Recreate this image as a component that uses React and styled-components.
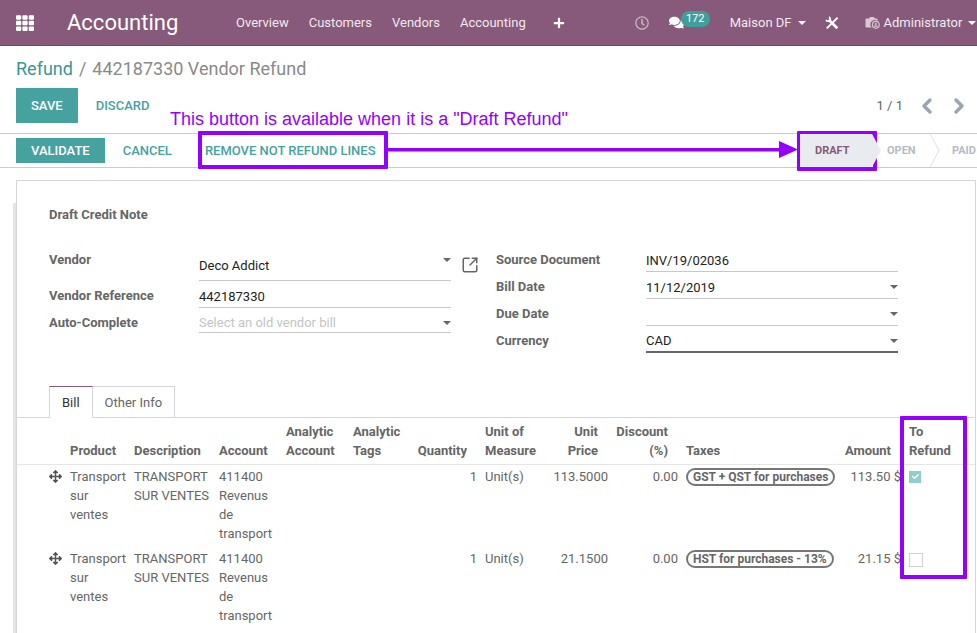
import React from 'react';
import styled, { createGlobalStyle } from 'styled-components';
import { FaTh, FaPlus, FaComments, FaArrowsAlt, FaRegClock, FaCheck } from 'react-icons/fa';
import { SquareArrowOutUpRight, ChevronLeft, ChevronRight } from 'lucide-react';

const PURPLE = '#9400ff';
const TEAM = '#45a29f';
const TEXT = '#666666';

const GlobalStyle = createGlobalStyle`
  html, body {
    margin: 0;
    padding: 0;
    height: 100%;
    background: #fff;
    overflow: hidden;
  }
  body {
    font-family: Roboto, "Noto Sans", sans-serif;
    font-size: 13px;
    color: ${TEXT};
  }
`;

const Page = styled.div`
  position: relative;
  width: 977px;
  height: 633px;
  overflow: hidden;
`;

/* top navbar */
const Navbar = styled.header`
  display: flex;
  align-items: center;
  height: 45px;
  background: #875a7b;
  border-bottom: 1px solid #6f4a66;
  color: #f1e9ef;
  box-sizing: content-box;
`;

const AppsIcon = styled(FaTh)`
  width: 18px;
  height: 18px;
  margin-left: 16px;
  color: #fff;
`;

const Brand = styled.div`
  margin-left: 33px;
  width: 169px;
  font-size: 22px;
  color: #fff;
`;

const NavMenu = styled.nav`
  display: flex;
  align-items: center;
  gap: 20px;
`;

const NavRight = styled.div`
  display: flex;
  align-items: center;
  margin-left: 70px;
`;

const NavItem = styled.span`
  display: inline-flex;
  align-items: center;
  margin-left: ${(p) => p.$gap || 0}px;
  color: ${(p) => p.$color || 'inherit'};
  white-space: nowrap;
`;

const Caret = styled.i`
  display: inline-block;
  width: 0;
  height: 0;
  margin-left: ${(p) => p.$gap || 6}px;
  border-left: 4px solid transparent;
  border-right: 4px solid transparent;
  border-top: 4px solid ${(p) => p.$color || '#fff'};
`;

const ChatWrap = styled.span`
  position: relative;
  display: inline-flex;
  width: 41px;
  margin-left: 20px;
  color: #fff;
`;

const Badge = styled.span`
  position: absolute;
  left: 12px;
  top: -4px;
  width: 29px;
  height: 16px;
  line-height: 15px;
  border-radius: 8px;
  background: #3f9f9c;
  color: #fff;
  font-size: 11px;
  text-align: center;
`;

/* control panel */
const ControlPanel = styled.section`
  padding: 11px 6px 0 16px;
`;

const Breadcrumb = styled.div`
  font-size: 18px;
  line-height: 24px;
  color: #8a8a8a;
  a { color: #3a9592; }
  span { margin: 0 6px; }
`;

const ButtonsRow = styled.div`
  display: flex;
  align-items: center;
  margin-top: 7px;
  height: 35px;
`;

const Primary = styled.button`
  height: ${(p) => p.$h}px;
  padding: 0 15px;
  border: 0;
  background: ${TEAM};
  color: #fff;
  font: 500 13px Roboto, sans-serif;
  text-transform: uppercase;
`;

const LinkBtn = styled.button`
  margin-left: ${(p) => p.$gap}px;
  padding: 0;
  border: 0;
  background: none;
  color: ${TEAM};
  font: 500 13px Roboto, sans-serif;
  text-transform: uppercase;
  white-space: nowrap;
`;

const Pager = styled.div`
  display: flex;
  align-items: center;
  margin-left: auto;
  color: #666;
  svg { color: #9aa5af; }
`;

const PrevIcon = styled(ChevronLeft)`
  margin-left: 12px;
`;

const NextIcon = styled(ChevronRight)`
  margin-left: 8px;
`;

/* status bar */
const StatusBar = styled.section`
  display: flex;
  align-items: center;
  height: 33px;
  margin-top: 10px;
  padding-left: 16px;
  border-top: 1px solid #ccc;
  border-bottom: 1px solid #ccc;
  box-sizing: content-box;
  overflow: hidden;
`;

const Stages = styled.div`
  display: flex;
  align-self: stretch;
  margin-left: auto;
  margin-right: -1px;
`;

const Stage = styled.div`
  position: relative;
  display: flex;
  align-items: center;
  width: ${(p) => p.$w}px;
  padding-left: ${(p) => p.$pad}px;
  box-sizing: border-box;
  background: ${(p) => (p.$active ? '#e9ecef' : 'transparent')};
  color: ${(p) => (p.$active ? '#875a7b' : '#b4bcc3')};
  font-size: 11px;
  font-weight: 700;
  z-index: ${(p) => (p.$active ? 2 : 1)};
`;

const StageTip = styled.svg`
  position: absolute;
  left: 100%;
  top: 0;
  width: 10px;
  height: 33px;
`;

/* form sheet */
const Sheet = styled.main`
  position: relative;
  margin: 12px 1px 0 16px;
  padding: 0;
  border: 1px solid #d6d6d6;
  border-bottom: 0;
  height: 460px;
  &::before {
    content: '';
    position: absolute;
    left: -4px;
    top: 22px;
    bottom: 0;
    width: 3px;
    background: #e4e4e8;
  }
`;

const SheetBody = styled.div`
  padding: 26px 0 0 32px;
`;

const Title = styled.div`
  font-weight: 700;
  font-size: 13px;
  line-height: 16px;
`;

const Columns = styled.div`
  display: flex;
  margin-top: 22px;
`;

const Group = styled.div`
  width: ${(p) => p.$w}px;
`;

const Row = styled.div`
  display: flex;
  height: ${(p) => p.$h}px;
`;

const Label = styled.div`
  width: 150px;
  flex: none;
  padding-top: 7px;
  font-weight: 700;
  font-size: 13px;
  line-height: 16px;
`;

const Field = styled.div`
  position: relative;
  display: flex;
  align-items: flex-end;
  justify-content: space-between;
  width: 252px;
  box-sizing: border-box;
  padding-bottom: ${(p) => (p.$pad == null ? 2 : p.$pad)}px;
  border-bottom: ${(p) => (p.$focus ? '2px solid #666' : '1px solid #c8c8c8')};
  color: ${(p) => (p.$muted ? '#c4c4c4' : '#222')};
  line-height: 16px;
`;

const FieldCaret = styled(Caret)`
  position: absolute;
  right: 0;
  top: 13px;
  margin: 0;
`;

const LinkIcon = styled(SquareArrowOutUpRight)`
  width: 18px;
  height: 18px;
  margin: 11px 0 0 10px;
  color: #666;
`;

/* tabs */
const Tabs = styled.div`
  display: flex;
  margin-top: 33px;
  padding-left: 32px;
  height: 31px;
  border-bottom: 1px solid #d5d5dc;
  box-sizing: content-box;
`;

const Tab = styled.div`
  box-sizing: border-box;
  height: ${(p) => (p.$active ? 32 : 31)}px;
  padding: 8px 12px 0;
  border: 1px solid #d5d5dc;
  border-left: ${(p) => (p.$active ? '1px solid #d5d5dc' : 0)};
  border-bottom: 0;
  border-top: 1px solid ${(p) => (p.$active ? '#875a7b' : '#d5d5dc')};
  background: #fff;
  color: ${(p) => (p.$active ? '#333' : '#666')};
`;

/* lines table */
const Table = styled.table`
  width: 958px;
  table-layout: fixed;
  border-collapse: collapse;
`;

const Th = styled.th`
  height: 46px;
  padding: 3px ${(p) => p.$right || 4}px 4px 4px;
  box-sizing: border-box;
  vertical-align: bottom;
  text-align: ${(p) => p.$align || 'left'};
  font-size: 13px;
  font-weight: 700;
  line-height: 19px;
  border-bottom: 1px solid #e6e6e6;
`;

const Td = styled.td`
  padding: ${(p) => (p.$flush ? '2px 0 4px' : '2px 4px 4px')};
  vertical-align: top;
  text-align: ${(p) => p.$align || 'left'};
  line-height: 19px;
  white-space: ${(p) => (p.$nowrap ? 'nowrap' : 'normal')};
`;

const DragIcon = styled(FaArrowsAlt)`
  display: block;
  width: 13px;
  height: 13px;
  margin: 3px 0 0 32px;
  color: #555;
`;

const TaxTag = styled.span`
  display: inline-block;
  height: 18px;
  box-sizing: border-box;
  padding: 0 5px;
  border: 2px solid #777;
  border-radius: 9px;
  font-size: 12px;
  font-weight: 700;
  line-height: 14px;
  white-space: nowrap;
`;

const Check = styled.span`
  display: flex;
  align-items: center;
  justify-content: center;
  width: ${(p) => (p.$on ? 12 : 14)}px;
  height: ${(p) => (p.$on ? 12 : 14)}px;
  margin-top: 4px;
  box-sizing: border-box;
  background: ${(p) => (p.$on ? '#8dcfcc' : '#fff')};
  border: ${(p) => (p.$on ? 0 : '1px solid #d0d0d6')};
  color: #fff;
  svg { width: 7px; height: 7px; }
`;

/* purple annotations laid over the screenshot */
const Note = styled.div`
  position: absolute;
  left: 170px;
  top: 109px;
  font: 18px/21px "Liberation Sans", Arial, sans-serif;
  color: ${PURPLE};
  white-space: nowrap;
`;

const Frame = styled.div`
  position: absolute;
  left: ${(p) => p.$x}px;
  top: ${(p) => p.$y}px;
  width: ${(p) => p.$w}px;
  height: ${(p) => p.$h}px;
  box-sizing: border-box;
  border: 4px solid ${PURPLE};
  border-radius: 1px;
`;

const Arrow = styled.svg`
  position: absolute;
  left: 386px;
  top: 140px;
`;

const cols = [49, 64, 85, 67, 67, 60, 72, 59, 72, 70, 155, 68, 70];

const lines = [
  { price: '113.5000', tax: 'GST + QST for purchases', amount: '113.50 $', checked: true },
  { price: '21.1500', tax: 'HST for purchases - 13%', amount: '21.15 $', checked: false },
];

function App() {
  return (
    <Page>
      <GlobalStyle />
      <Navbar>
        <AppsIcon />
        <Brand>Accounting</Brand>
        <NavMenu>
          <NavItem>Overview</NavItem>
          <NavItem>Customers</NavItem>
          <NavItem>Vendors</NavItem>
          <NavItem>Accounting</NavItem>
          <NavItem $gap={7} $color="#fff"><FaPlus size={12} /></NavItem>
        </NavMenu>
        <NavRight>
          <NavItem $color="#c9b5c4"><FaRegClock size={14} /></NavItem>
          <ChatWrap>
            <FaComments size={15} />
            <Badge>172</Badge>
          </ChatWrap>
          <NavItem $gap={20}>Maison DF<Caret /></NavItem>
          <NavItem $gap={19}>
            <svg width="14" height="14" viewBox="0 0 14 14" fill="none" stroke="#fff">
              <path d="M1 4 A2.2 2.2 0 1 0 4 1" strokeWidth="1.8" />
              <path d="M4.5 4.5 L12.3 12.3" strokeWidth="2.8" />
              <path d="M12.6 1.6 L1.8 12.4" strokeWidth="2" />
            </svg>
          </NavItem>
          <NavItem $gap={26}>
            <svg width="15" height="13" viewBox="0 0 15 13">
              <path fill="#d8c9d3" d="M1.5 2.5h2.6L5 1h4l.9 1.5h1.6c.6 0 1 .4 1 1V5a4.2 4.2 0 0 0-5.7 6.5H1.5c-.6 0-1-.4-1-1v-7c0-.6.4-1 1-1z" />
              <circle cx="10.8" cy="8.8" r="3.4" fill="none" stroke="#d8c9d3" strokeWidth="1.2" />
              <circle cx="10.8" cy="8" r="1.1" fill="#d8c9d3" />
              <rect x="9.2" y="9.4" width="3.2" height="1.4" fill="#d8c9d3" />
            </svg>
          </NavItem>
          <NavItem $gap={4}>Administrator<Caret /></NavItem>
        </NavRight>
      </Navbar>

      <ControlPanel>
        <Breadcrumb><a>Refund</a><span>/</span>442187330 Vendor Refund</Breadcrumb>
        <ButtonsRow>
          <Primary $h={35}>Save</Primary>
          <LinkBtn $gap={18}>Discard</LinkBtn>
          <Pager>
            1 / 1
            <PrevIcon size={24} strokeWidth={3.4} />
            <NextIcon size={24} strokeWidth={3.4} />
          </Pager>
        </ButtonsRow>
      </ControlPanel>

      <StatusBar>
        <Primary $h={25}>Validate</Primary>
        <LinkBtn $gap={18}>Cancel</LinkBtn>
        <LinkBtn $gap={33}>Remove not refund lines</LinkBtn>
        <Stages>
          <Stage $active $w={72} $pad={15}>
            DRAFT
            <StageTip viewBox="0 0 10 33">
              <path d="M0 0 L9 16.5 L0 33 Z" fill="#e9ecef" />
            </StageTip>
          </Stage>
          <Stage $w={58} $pad={15}>
            OPEN
            <StageTip viewBox="0 0 10 33">
              <path d="M0 0 L9 16.5 L0 33" fill="none" stroke="#dfe2e5" />
            </StageTip>
          </Stage>
          <Stage $w={48} $pad={22}>PAID</Stage>
        </Stages>
      </StatusBar>

      <Sheet>
        <SheetBody>
          <Title>Draft Credit Note</Title>
          <Columns>
            <Group $w={447}>
              <Row $h={36}>
                <Label>Vendor</Label>
                <Field $pad={6}>
                  Deco Addict
                  <FieldCaret $color="#666" />
                </Field>
                <LinkIcon strokeWidth={2} />
              </Row>
              <Row $h={27}>
                <Label>Vendor Reference</Label>
                <Field>442187330</Field>
              </Row>
              <Row $h={25}>
                <Label>Auto-Complete</Label>
                <Field $muted $pad={1}>
                  Select an old vendor bill
                  <FieldCaret $color="#666" />
                </Field>
              </Row>
            </Group>
            <Group $w={402}>
              <Row $h={27}>
                <Label>Source Document</Label>
                <Field>INV/19/02036</Field>
              </Row>
              <Row $h={27}>
                <Label>Bill Date</Label>
                <Field>
                  11/12/2019
                  <FieldCaret $color="#666" />
                </Field>
              </Row>
              <Row $h={27}>
                <Label>Due Date</Label>
                <Field>
                  <FieldCaret $color="#666" />
                </Field>
              </Row>
              <Row $h={27}>
                <Label>Currency</Label>
                <Field $focus>
                  CAD
                  <FieldCaret $color="#666" />
                </Field>
              </Row>
            </Group>
          </Columns>
        </SheetBody>

        <Tabs>
          <Tab $active>Bill</Tab>
          <Tab>Other Info</Tab>
        </Tabs>

        <Table>
          <colgroup>
            {cols.map((w, i) => <col key={i} style={{ width: w }} />)}
          </colgroup>
          <thead>
            <tr>
              <Th />
              <Th>Product</Th>
              <Th>Description</Th>
              <Th>Account</Th>
              <Th>Analytic Account</Th>
              <Th>Analytic Tags</Th>
              <Th $align="right" $right={14}>Quantity</Th>
              <Th>Unit of Measure</Th>
              <Th $align="right" $right={14}>Unit Price</Th>
              <Th $align="right" $right={14}>Discount (%)</Th>
              <Th>Taxes</Th>
              <Th $align="right" $right={14}>Amount</Th>
              <Th>To<br />Refund</Th>
            </tr>
          </thead>
          <tbody>
            {lines.map((l) => (
              <tr key={l.price}>
                <Td $flush><DragIcon /></Td>
                <Td>Transport sur ventes</Td>
                <Td>TRANSPORT SUR VENTES</Td>
                <Td>411400 Revenus de transport</Td>
                <Td />
                <Td />
                <Td $align="right">1</Td>
                <Td>Unit(s)</Td>
                <Td $align="right">{l.price}</Td>
                <Td $align="right">0.00</Td>
                <Td><TaxTag>{l.tax}</TaxTag></Td>
                <Td $align="right" $nowrap>{l.amount}</Td>
                <Td><Check $on={l.checked}>{l.checked && <FaCheck />}</Check></Td>
              </tr>
            ))}
          </tbody>
        </Table>
      </Sheet>

      <Note>This button is available when it is a "Draft Refund"</Note>
      <Frame $x={198} $y={131} $w={190} $h={38} />
      <Frame $x={797} $y={131} $w={80} $h={40} />
      <Frame $x={900} $y={416} $w={67} $h={163} />
      <Arrow width="412" height="20" viewBox="0 0 412 20">
        <rect x="0" y="8" width="396" height="3.5" fill={PURPLE} />
        <path d="M393 1 L412 9.5 L393 18 Z" fill={PURPLE} />
      </Arrow>
    </Page>
  );
}

export default App;
